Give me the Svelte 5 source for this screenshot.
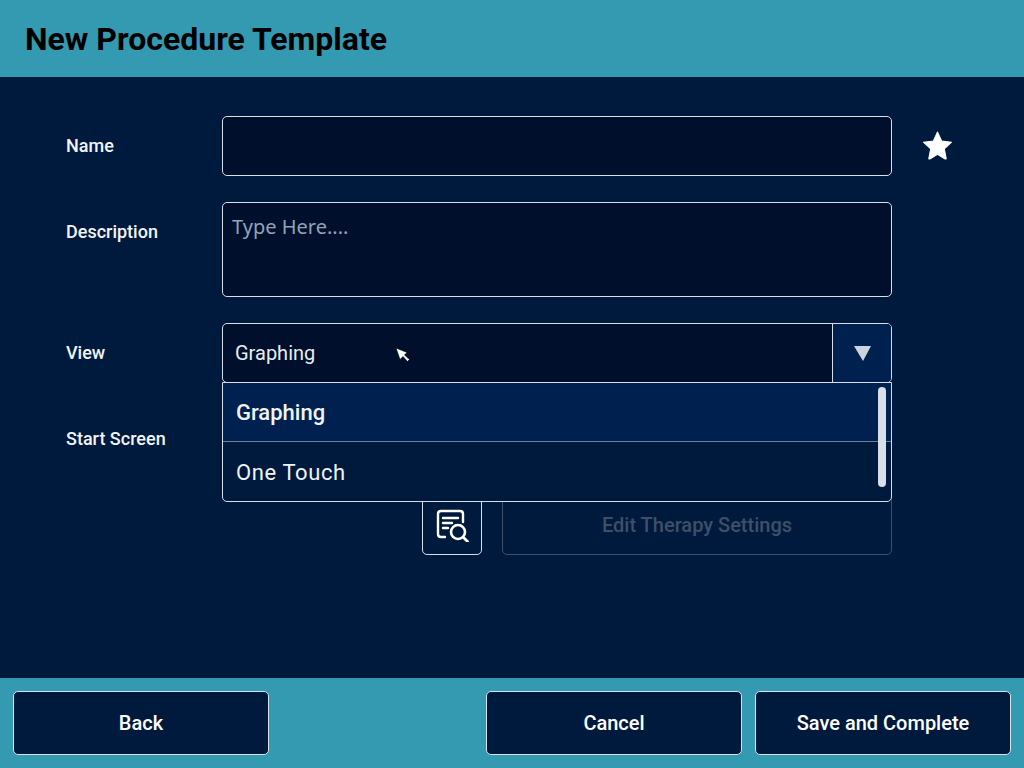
<script>
	const viewOptions = ['Graphing', 'One Touch'];
	let selected = $state('Graphing');
</script>

<div class="screen">
	<header>
		<h1>New Procedure Template</h1>
	</header>

	<main>
		<div class="form">
			<span class="label">Name</span>
			<div class="box name-box"></div>
			<svg class="star" viewBox="0 0 30 30" width="31" height="31" aria-hidden="true">
				<path d="M15 2 L19 10.6 L28.6 11.8 L21.6 18.2 L23.4 27.4 Q23.5 28.4 22.4 28 L15 23.6 L7.6 28 Q6.5 28.4 6.6 27.4 L8.4 18.2 L1.4 11.8 L11 10.6 Z" fill="#fff" stroke="#fff" stroke-width="1" stroke-linejoin="round" />
			</svg>

			<span class="label">Description</span>
			<div class="box desc-box"><span class="placeholder">Type Here....</span></div>
			<span></span>

			<span class="label">View</span>
			<div class="view-wrap">
				<div class="box select">
					<span class="value">{selected}</span>
					<span class="arrow"><i></i></span>
				</div>
				<ul class="menu">
					{#each viewOptions as opt}
						<li class:active={opt === selected}>{opt}</li>
					{/each}
					<span class="thumb"></span>
				</ul>
				<svg class="cursor" viewBox="0 0 15 15" width="15" height="15" aria-hidden="true">
					<path d="M1 1 L12 5.5 L9.5 8 L14.5 12.5 L12.5 14.5 L8 9.5 L5 12.5 Z" fill="#fff" stroke="#000" stroke-width="0.6" />
				</svg>
			</div>
			<span></span>

			<span class="label">Start Screen</span>
			<div class="start-spacer"></div>
			<span></span>

			<span></span>
			<div class="actions">
				<div class="icon-btn">
					<svg viewBox="0 0 34 34" width="34" height="34" fill="none" stroke="#fff" stroke-width="2.4" stroke-linecap="round" aria-hidden="true">
						<path d="M10 29 H6 Q3 29 3 26 V6 Q3 3 6 3 H25 Q28 3 28 6 V14" />
						<path d="M8 10 H23 M8 15 H17 M8 20 H13" />
						<circle cx="23" cy="24" r="7" stroke-width="2.6" />
						<path d="M28.5 29.5 L32.5 33.5" stroke-width="2.8" />
					</svg>
				</div>
				<div class="edit-btn">Edit Therapy Settings</div>
			</div>
			<span></span>
		</div>
	</main>

	<footer>
		<button>Back</button>
		<div class="right">
			<button>Cancel</button>
			<button>Save and Complete</button>
		</div>
	</footer>
</div>

<style>
	:global(body) {
		margin: 0;
		background: #001a3d;
	}
	.screen {
		width: 1024px;
		height: 768px;
		display: flex;
		flex-direction: column;
		font-family: Roboto, 'Liberation Sans', sans-serif;
		color: #fff;
		overflow: hidden;
	}
	header {
		height: 77px;
		flex: none;
		background: #349ab2;
		display: flex;
		align-items: center;
		padding-left: 25px;
		box-sizing: border-box;
	}
	h1 {
		margin: 0;
		font-size: 32px;
		font-weight: 700;
		color: #000;
	}
	main {
		flex: 1;
		background: #001a3d;
		padding: 39px 0 0 66px;
		box-sizing: border-box;
	}
	.form {
		display: grid;
		grid-template-columns: 156px 670px 90px;
		row-gap: 26px;
		align-items: start;
	}
	.label {
		padding-top: 19px;
		font-size: 18px;
		font-weight: 500;
		color: #f2f4f7;
	}
	.box {
		box-sizing: border-box;
		border: 1px solid #d8dfe8;
		border-radius: 5px;
		background: #000f2b;
	}
	.name-box {
		height: 60px;
	}
	.star {
		margin: 14px 0 0 30px;
	}
	.desc-box {
		height: 95px;
		padding: 10px 9px;
	}
	.placeholder {
		font-family: 'Noto Sans', sans-serif;
		font-size: 20px;
		color: #94a2b5;
	}
	.view-wrap {
		position: relative;
		height: 60px;
	}
	.select {
		height: 60px;
		display: flex;
		align-items: center;
		justify-content: space-between;
		padding-left: 12px;
		overflow: hidden;
	}
	.value {
		font-size: 20px;
		color: #e8ecf1;
	}
	.arrow {
		width: 59px;
		height: 100%;
		box-sizing: border-box;
		border-left: 1px solid #d8dfe8;
		background: #00214f;
		display: flex;
		align-items: center;
		justify-content: center;
	}
	.arrow i {
		width: 0;
		height: 0;
		border-left: 9px solid transparent;
		border-right: 8px solid transparent;
		border-top: 15px solid #cdd3dc;
	}
	.menu {
		position: absolute;
		top: 59px;
		left: 0;
		right: 0;
		z-index: 2;
		height: 120px;
		margin: 0;
		padding: 0;
		list-style: none;
		box-sizing: border-box;
		border: 1px solid #d8dfe8;
		border-radius: 0 0 5px 5px;
		background: #001a3d;
		overflow: hidden;
	}
	.menu li {
		height: 60px;
		box-sizing: border-box;
		padding-left: 13px;
		display: flex;
		align-items: center;
		font-size: 22px;
		letter-spacing: 0.6px;
		color: #f0f3f6;
	}
	.menu li.active {
		height: 59px;
		background: #00214f;
		font-weight: 500;
		letter-spacing: 0;
		border-bottom: 1px solid #6d7f9b;
	}
	.thumb {
		position: absolute;
		top: 4px;
		right: 5px;
		width: 8px;
		height: 100px;
		border-radius: 4px;
		background: #d9dfea;
	}
	.cursor {
		position: absolute;
		left: 173px;
		top: 24px;
	}
	.start-spacer {
		height: 60px;
	}
	.actions {
		display: flex;
		gap: 20px;
		padding-left: 200px;
	}
	.icon-btn {
		width: 60px;
		height: 60px;
		flex: none;
		box-sizing: border-box;
		border: 1px solid #d8dfe8;
		border-radius: 5px;
		display: flex;
		align-items: center;
		justify-content: center;
	}
	.edit-btn {
		flex: 1;
		height: 60px;
		box-sizing: border-box;
		border: 1px solid #3f4f68;
		border-radius: 5px;
		display: flex;
		align-items: center;
		justify-content: center;
		font-size: 20px;
		font-weight: 500;
		color: #3f4f68;
	}
	footer {
		height: 90px;
		flex: none;
		background: #349ab2;
		display: flex;
		align-items: center;
		justify-content: space-between;
		padding: 0 13px;
		box-sizing: border-box;
	}
	.right {
		display: flex;
		gap: 13px;
	}
	button {
		width: 256px;
		height: 64px;
		box-sizing: border-box;
		background: #001a3d;
		border: 1px solid #d8e4ec;
		border-radius: 5px;
		color: #fff;
		font-family: Roboto, 'Liberation Sans', sans-serif;
		font-size: 20px;
		font-weight: 500;
	}
</style>
